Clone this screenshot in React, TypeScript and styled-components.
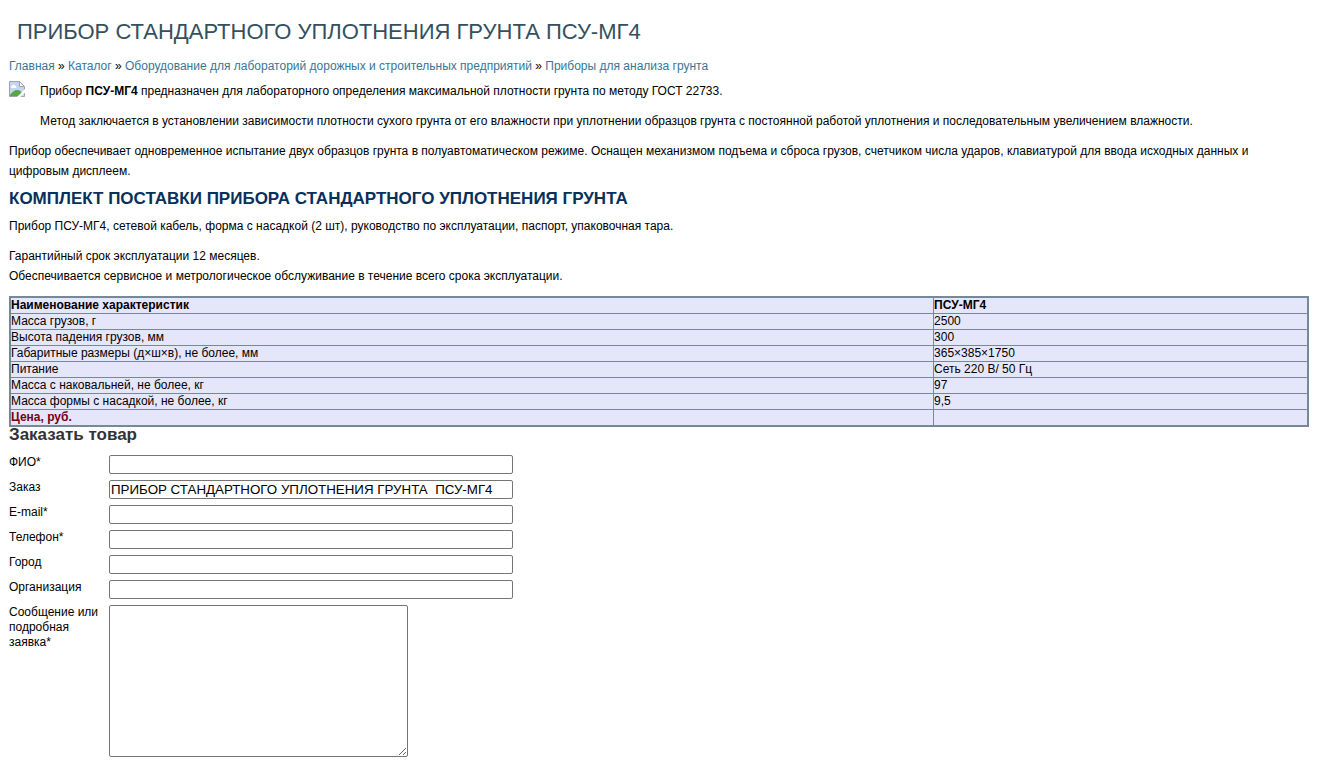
import React from 'react';
import styled, { createGlobalStyle } from 'styled-components';

const GlobalStyle = createGlobalStyle`
  body {
    margin: 0;
    background: #fff;
    color: #000;
    font: 12px/20px Arial, "Liberation Sans", sans-serif;
  }
`;

const Page = styled.main`
  padding: 17px 8px 4px 9px;
`;

const Title = styled.h1`
  margin: 0 0 9px;
  padding: 0 8px;
  color: #34505e;
  font-size: 22px;
  font-weight: 400;
  line-height: 30px;
`;

const Breadcrumbs = styled.nav`
  margin-bottom: 5px;
`;

const Crumb = styled.a`
  color: #3a7595;
  text-decoration: none;
`;

const Intro = styled.div`
  display: flex;
  gap: 15px;
  margin-bottom: 10px;
`;

const MissingPhoto = styled.svg`
  flex: none;
  width: 16px;
  height: 16px;
`;

const Text = styled.p`
  margin: 0 0 10px;

  &:last-child {
    margin-bottom: 0;
  }
`;

const Description = styled.p`
  margin: 0;
  padding-right: 16px;
`;

const Heading = styled.h2<{ $color: string }>`
  margin: 0;
  color: ${({ $color }) => $color};
  font-size: 17px;
  line-height: 16px;
`;

const Kit = styled.section`
  margin: 10px 0;

  ${Heading} {
    margin-bottom: 9px;
  }
`;

const Specs = styled.table`
  width: 100%;
  table-layout: fixed;
  border: 2px solid #778899;
  border-collapse: collapse;
  background: #e6e6fa;
  line-height: 15px;
`;

const cell = `
  height: 15px;
  padding: 0;
  border: 1px solid #778899;
  text-align: left;
`;

const HeadCell = styled.th<{ $width: string }>`
  ${cell}
  width: ${({ $width }) => $width};
`;

const Cell = styled.td`
  ${cell}
`;

const Price = styled.strong`
  color: #780010;
`;

const OrderForm = styled.form`
  display: grid;
  gap: 6px;
  margin-top: 12px;
`;

const Field = styled.div`
  display: grid;
  grid-template-columns: 90px minmax(0, 404px);
  column-gap: 10px;
  align-items: start;
  line-height: 15px;
`;

const Input = styled.input`
  box-sizing: border-box;
  width: 100%;
  height: 19px;
  padding: 1px;
  border: 1px solid #767676;
  border-radius: 2px;
  background: #fff;
  color: #000;
  font-family: Arial, "Liberation Sans", sans-serif;
`;

const Message = styled.textarea`
  box-sizing: border-box;
  display: block;
  width: 299px;
  max-width: 100%;
  height: 152px;
  padding: 2px;
  border: 1px solid #767676;
  border-radius: 2px;
  background: #fff;
  font-family: Arial, "Liberation Sans", sans-serif;
`;

const crumbs = [
  'Главная',
  'Каталог',
  'Оборудование для лабораторий дорожных и строительных предприятий',
  'Приборы для анализа грунта',
];

const specs = [
  ['Масса грузов, г', '2500'],
  ['Высота падения грузов, мм', '300'],
  ['Габаритные размеры (д×ш×в), не более, мм', '365×385×1750'],
  ['Питание', 'Сеть 220 В/ 50 Гц'],
  ['Масса с наковальней, не более, кг', '97'],
  ['Масса формы с насадкой, не более, кг', '9,5'],
];

const fields = [
  { id: 'name', label: 'ФИО*', type: 'text' },
  { id: 'product', label: 'Заказ', type: 'text', value: 'ПРИБОР СТАНДАРТНОГО УПЛОТНЕНИЯ ГРУНТА  ПСУ-МГ4' },
  { id: 'email', label: 'E-mail*', type: 'email' },
  { id: 'phone', label: 'Телефон*', type: 'tel' },
  { id: 'city', label: 'Город', type: 'text' },
  { id: 'company', label: 'Организация', type: 'text' },
];

export default function App() {
  return (
    <>
      <GlobalStyle />
      <Page>
        <Title>ПРИБОР СТАНДАРТНОГО УПЛОТНЕНИЯ ГРУНТА ПСУ-МГ4</Title>
        <Breadcrumbs>
          {crumbs.map((name, i) => (
            <React.Fragment key={name}>
              {i > 0 && ' » '}
              <Crumb href="#">{name}</Crumb>
            </React.Fragment>
          ))}
        </Breadcrumbs>

        <Intro>
          <MissingPhoto viewBox="0 0 16 16" aria-hidden="true">
            <path d="M.5.5h10l5 5v10H.5z" fill="#c3d5f2" />
            <path d="M3 7c-1.500 0-1.500-2 0-2 .3-2 3-2 3.300 0 1.500 0 1.500 2 0 2z" fill="#fff" />
            <path d="M1 15v-1c2-3 4.500-5 7-5s4 1 5 3l-3 3z" fill="#56a846" />
            <path d="M10.500.5v5h5z" fill="#f5f5f5" />
            <path d="M.5 15.500V.5h10l5 5v10z M10.500.5v5h5" fill="none" stroke="#a0a4a8" />
            <path d="M8 16 16 8v3.500L11.500 16z" fill="#fff" />
          </MissingPhoto>
          <div>
            <Text>
              Прибор <strong>ПСУ-МГ4</strong> предназначен для лабораторного определения максимальной плотности грунта по
              методу ГОСТ 22733.
            </Text>
            <Text>
              Метод заключается в установлении зависимости плотности сухого грунта от его влажности при уплотнении
              образцов грунта с постоянной работой уплотнения и последовательным увеличением влажности.
            </Text>
          </div>
        </Intro>
        <Description>
          Прибор обеспечивает одновременное испытание двух образцов грунта в полуавтоматическом режиме. Оснащен
          механизмом подъема и сброса грузов, счетчиком числа ударов, клавиатурой для ввода исходных данных и цифровым
          дисплеем.
        </Description>

        <Kit>
          <Heading $color="#07305a">КОМПЛЕКТ ПОСТАВКИ ПРИБОРА СТАНДАРТНОГО УПЛОТНЕНИЯ ГРУНТА</Heading>
          <Text>
            Прибор ПСУ-МГ4, сетевой кабель, форма с насадкой (2 шт), руководство по эксплуатации, паспорт, упаковочная
            тара.
          </Text>
          <Text>
            Гарантийный срок эксплуатации 12 месяцев.
            <br />
            Обеспечивается сервисное и метрологическое обслуживание в течение всего срока эксплуатации.
          </Text>
        </Kit>

        <Specs>
          <thead>
            <tr>
              <HeadCell $width="71.2%">Наименование характеристик</HeadCell>
              <HeadCell $width="28.8%">ПСУ-МГ4</HeadCell>
            </tr>
          </thead>
          <tbody>
            {specs.map(([name, value]) => (
              <tr key={name}>
                <Cell>{name}</Cell>
                <Cell>{value}</Cell>
              </tr>
            ))}
            <tr>
              <Cell>
                <Price>Цена, руб.</Price>
              </Cell>
              <Cell />
            </tr>
          </tbody>
        </Specs>

        <Heading $color="#333">Заказать товар</Heading>
        <OrderForm>
          {fields.map(({ id, label, type, value }) => (
            <Field key={id}>
              <label htmlFor={id}>{label}</label>
              <Input id={id} type={type} defaultValue={value} />
            </Field>
          ))}
          <Field>
            <label htmlFor="message">Сообщение или подробная заявка*</label>
            <Message id="message" />
          </Field>
        </OrderForm>
      </Page>
    </>
  );
}
